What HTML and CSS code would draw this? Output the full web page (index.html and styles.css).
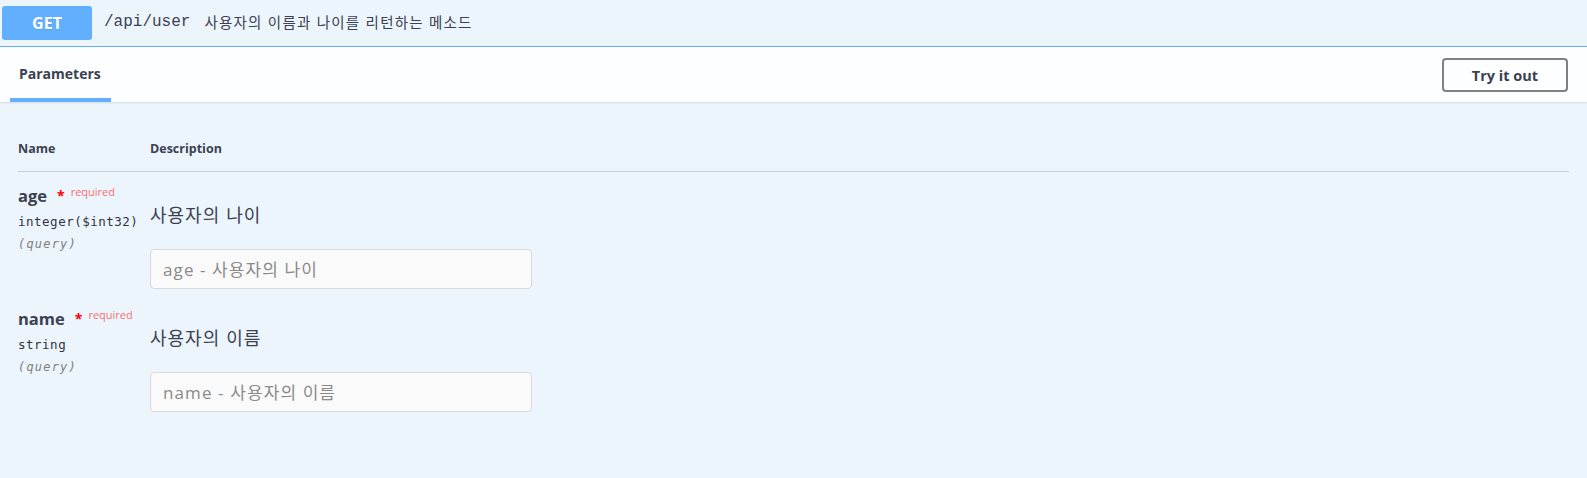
FILE: index.html
```html
<!DOCTYPE html>
<html lang="ko">
<head>
<meta charset="utf-8">
<title>GET /api/user</title>
<link rel="stylesheet" href="styles.css">
</head>
<body>
<div class="opblock">
  <div class="summary">
    <span class="method">GET</span>
    <span class="path">/api/user</span>
    <span class="summary-desc">사용자의 이름과 나이를 리턴하는 메소드</span>
  </div>
  <div class="section-header">
    <div class="tab">Parameters</div>
    <button class="try-out">Try it out</button>
  </div>
  <div class="table-container">
    <div class="params">
      <div class="th">Name</div>
      <div class="th">Description</div>
      <div class="rule"></div>

      <div class="col-name">
        <div class="pname">age<span class="star">*</span><span class="req">required</span></div>
        <div class="ptype">integer<span class="fmt">($int32)</span></div>
        <div class="pin">(query)</div>
      </div>
      <div class="col-desc">
        <p class="pdesc">사용자의 나이</p>
        <input class="pinput" type="text" placeholder="age - 사용자의 나이">
      </div>

      <div class="col-name">
        <div class="pname">name<span class="star">*</span><span class="req">required</span></div>
        <div class="ptype">string</div>
        <div class="pin">(query)</div>
      </div>
      <div class="col-desc">
        <p class="pdesc">사용자의 이름</p>
        <input class="pinput" type="text" placeholder="name - 사용자의 이름">
      </div>
    </div>
  </div>
</div>
</body>
</html>
```
FILE: styles.css
```css
html, body {
  margin: 0;
  padding: 0;
}
body {
  background: #ecf4fc;
  color: #3b4151;
  font-family: "Open Sans", "Noto Sans CJK KR", sans-serif;
  width: 1587px;
  height: 478px;
  overflow: hidden;
}
.opblock {
  background: #ecf4fc;
}
.summary {
  display: flex;
  align-items: center;
  padding-left: 2px;
  border-bottom: 1px solid #61affe;
  box-sizing: border-box;
  height: 47px;
}
.method {
  display: flex;
  align-items: center;
  justify-content: center;
  width: 90px;
  height: 34px;
  margin-top: -1px;
  background: #61affe;
  border-radius: 3px;
  color: #fff;
  font-weight: 700;
  font-size: 16px;
  text-shadow: 0 1px 0 rgba(0,0,0,.1);
}
.path {
  margin-left: 12px;
  font-family: "Liberation Mono", "DejaVu Sans Mono", monospace;
  font-size: 16px;
  color: #3b4151;
  margin-top: -3px;
}
.summary-desc {
  margin-left: 14px;
  font-family: "Noto Sans CJK KR", sans-serif;
  font-size: 14.5px;
  letter-spacing: 1.2px;
  color: #3b4151;
  margin-top: -3px;
}
.section-header {
  display: flex;
  align-items: center;
  justify-content: space-between;
  height: 55px;
  padding: 0 19px 0 10px;
  background: rgba(255,255,255,.85);
  box-shadow: 0 1px 2px rgba(0,0,0,.1);
}
.tab {
  align-self: stretch;
  display: flex;
  align-items: center;
  width: 101px;
  box-sizing: border-box;
  padding-left: 9px;
  padding-top: 2px;
  font-weight: 700;
  font-size: 14px;
  border-bottom: 4px solid #61affe;
}
.try-out {
  width: 126px;
  height: 34px;
  margin-top: 1px;
  background: transparent;
  border: 2px solid #808080;
  border-radius: 4px;
  font-family: "Open Sans", sans-serif;
  font-weight: 700;
  font-size: 14.5px;
  color: #3b4151;
  padding: 0;
}
.table-container {
  padding: 20px 18px 0 18px;
}
.params {
  display: grid;
  grid-template-columns: 132px 1fr;
}
.th {
  font-size: 12.5px;
  font-weight: 700;
  line-height: 16px;
  padding: 19px 0 14px;
}
.rule {
  grid-column: 1 / -1;
  height: 1px;
  background: #c8ced6;
}
.col-name {
  padding-top: 14px;
}
.pname {
  font-size: 16.5px;
  font-weight: 700;
  line-height: 20px;
  white-space: nowrap;
}
.star {
  color: red;
  font-size: 14px;
  position: relative;
  top: -1px;
  margin-left: 10px;
}
.req {
  font-size: 11px;
  font-weight: 400;
  color: rgba(255,0,0,.6);
  position: relative;
  top: -6px;
  padding-left: 6px;
}
.ptype {
  font-family: "DejaVu Sans Mono", monospace;
  font-size: 12.5px;
  font-weight: 400;
  line-height: 18px;
  padding-top: 5px;
  letter-spacing: 0.5px;
  color: #2f3444;
}
.pin {
  font-family: "DejaVu Sans Mono", monospace;
  font-size: 12px;
  font-style: italic;
  font-weight: 400;
  color: gray;
  line-height: 16px;
  padding-top: 5px;
  letter-spacing: 1.2px;
}
.col-desc {
  padding: 10px 0 6px;
}
.pdesc {
  margin: 20px 0 23px;
  font-family: "Noto Sans CJK KR", sans-serif;
  font-size: 18px;
  letter-spacing: 1px;
  line-height: 24px;
}
.pinput {
  display: block;
  width: 382px;
  height: 40px;
  box-sizing: border-box;
  padding: 0 12px;
  border: 1px solid #d9d9d9;
  border-radius: 4px;
  background: #fafafa;
  font-family: "Open Sans", "Noto Sans CJK KR", sans-serif;
  font-size: 17px;
  letter-spacing: 1.1px;
  color: #3b4151;
  outline: none;
}
.pinput::placeholder {
  color: #8a8a8a;
}
```
